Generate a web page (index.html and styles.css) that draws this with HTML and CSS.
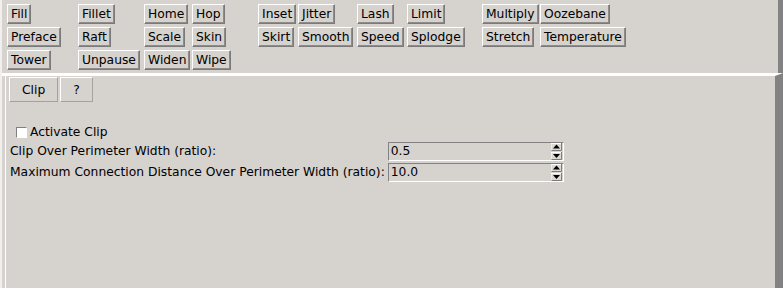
FILE: index.html
```html
<html>

<head>
  <meta name="viewport" content="width=device-width, initial-scale=1.0">
  <link rel="stylesheet" href="styles.css">
</head>

<body>
  <div class="window">
    <div class="toolbar">
      <button class="tool">Fill</button>
      <button class="tool">Fillet</button>
      <button class="tool">Home</button>
      <button class="tool">Hop</button>
      <button class="tool">Inset</button>
      <button class="tool">Jitter</button>
      <button class="tool">Lash</button>
      <button class="tool">Limit</button>
      <button class="tool">Multiply</button>
      <button class="tool">Oozebane</button>

      <button class="tool">Preface</button>
      <button class="tool">Raft</button>
      <button class="tool">Scale</button>
      <button class="tool">Skin</button>
      <button class="tool">Skirt</button>
      <button class="tool">Smooth</button>
      <button class="tool">Speed</button>
      <button class="tool">Splodge</button>
      <button class="tool">Stretch</button>
      <button class="tool">Temperature</button>

      <button class="tool">Tower</button>
      <button class="tool">Unpause</button>
      <button class="tool">Widen</button>
      <button class="tool">Wipe</button>
    </div>

    <div class="panel">
      <div class="panel-body">
        <div class="tabs">
          <button class="tab">Clip</button>
          <button class="tab">?</button>
        </div>

        <div class="settings">
          <label class="check"><span class="box"></span>Activate Clip</label>
          <div class="fields">
            <span class="field-label">Clip Over Perimeter Width (ratio):</span>
            <div class="spin">
              <span class="spin-value">0.5</span>
              <svg class="spin-arrows" width="11" height="17" viewBox="0 0 11 17">
                <rect x="0" y="0" width="11" height="8" fill="#dcd9d5" />
                <path d="M0 7.5V0.5H10.5" stroke="#fff" fill="none" />
                <path d="M0.5 7.5H10.5V0" stroke="#7c7c7c" fill="none" />
                <polygon points="5.5,1.5 9,5.5 2,5.5" fill="#000" />
                <rect x="0" y="9" width="11" height="8" fill="#dcd9d5" />
                <path d="M0 16.5V9.5H10.5" stroke="#fff" fill="none" />
                <path d="M0.5 16.5H10.5V9" stroke="#7c7c7c" fill="none" />
                <polygon points="2,11 9,11 5.5,15" fill="#000" />
              </svg>
            </div>
            <span class="field-label">Maximum Connection Distance Over Perimeter Width (ratio):</span>
            <div class="spin">
              <span class="spin-value">10.0</span>
              <svg class="spin-arrows" width="11" height="17" viewBox="0 0 11 17">
                <rect x="0" y="0" width="11" height="8" fill="#dcd9d5" />
                <path d="M0 7.5V0.5H10.5" stroke="#fff" fill="none" />
                <path d="M0.5 7.5H10.5V0" stroke="#7c7c7c" fill="none" />
                <polygon points="5.5,1.5 9,5.5 2,5.5" fill="#000" />
                <rect x="0" y="9" width="11" height="8" fill="#dcd9d5" />
                <path d="M0 16.5V9.5H10.5" stroke="#fff" fill="none" />
                <path d="M0.5 16.5H10.5V9" stroke="#7c7c7c" fill="none" />
                <polygon points="2,11 9,11 5.5,15" fill="#000" />
              </svg>
            </div>
          </div>
        </div>
      </div>
    </div>
  </div>
</body>

</html>
```

FILE: styles.css
```css
* {
  box-sizing: border-box;
}

body {
  margin: 0;
  width: 783px;
  height: 288px;
  overflow: hidden;
  background-color: #d6d2ce;
  font-family: "DejaVu Sans", sans-serif;
  font-size: 12.3px;
  color: #000;
}

.window {
  height: 288px;
  border-left: 2px solid #f2f0ee;
}

/* tool buttons, ten per row */
.toolbar {
  height: 73px;
  padding: 4px 0 0 5px;
  border-right: 5px solid #828282;
  display: grid;
  grid-template-columns: 71px 66px 48px 66px 40px 59px 50px 75px 58px auto;
  grid-auto-rows: 20px;
  row-gap: 3px;
  justify-items: start;
  align-content: start;
}

.tool {
  height: 20px;
  margin: 0;
  padding: 0 3px;
  font: inherit;
  line-height: 18px;
  color: #000;
  background-color: #d6d2ce;
  border: 1px solid;
  border-color: #fff #7a7a7a #7a7a7a #fff;
  box-shadow: inset -1px -1px 0 #8e8b88;
}

.panel {
  height: 215px;
  border-top: 3px solid #fff;
  border-right: 8px solid #828282;
}

.panel-body {
  height: 100%;
  margin-left: 3px;
  padding: 1px 0 0 3px;
  border-left: 1px solid #fff;
}

.tabs {
  display: flex;
  gap: 2px;
}

.tab {
  height: 25px;
  margin: 0;
  padding: 0 12px;
  font: inherit;
  color: #000;
  background-color: #d6d2ce;
  border: 1px solid;
  border-color: #fff #a5a29e #a5a29e #fff;
}

.settings {
  margin-top: 20px;
  padding-left: 1px;
}

.check {
  display: flex;
  align-items: center;
  height: 20px;
  padding-left: 6px;
  gap: 3px;
}

.box {
  width: 11px;
  height: 11px;
  background-color: #fff;
  border: 1px solid;
  border-color: #808080 #fff #fff #808080;
}

.fields {
  display: grid;
  grid-template-columns: auto 176px;
  row-gap: 2px;
  align-items: center;
  justify-content: start;
}

.field-label {
  padding-right: 3px;
  line-height: 19px;
}

.spin {
  height: 19px;
  display: flex;
  align-items: center;
  justify-content: space-between;
  padding: 0 1px 0 2px;
  border: 1px solid;
  border-color: #828282 #fff #fff #828282;
}

.spin-value {
  line-height: 17px;
}

.spin-arrows {
  display: block;
}
```
